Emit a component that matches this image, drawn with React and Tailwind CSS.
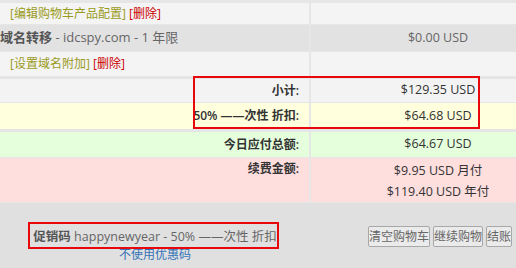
import React from 'react';

const font = { fontFamily: '"Open Sans", "Noto Sans CJK SC", sans-serif' };

function Row({ bg, h, left, right, leftClass = '', rightClass = '' }) {
  return (
    <div className={`grid grid-cols-[309px_1fr] gap-x-[2px] ${h}`}>
      <div className={`${bg} ${leftClass}`}>{left}</div>
      <div className={`${bg} ${rightClass}`}>{right}</div>
    </div>
  );
}

export default function App() {
  return (
    <div
      className="relative w-[516px] h-[268px] overflow-hidden bg-[#e0e0e0] text-[12px] text-[#333]"
      style={font}
    >
      <div className="flex flex-col gap-[1px] bg-[#e6e6e6] pt-[3px] pb-[1px]">
        <Row
          bg="bg-[#f4f4f4]"
          h="h-[21px]"
          leftClass="flex items-center pl-[10px]"
          left={
            <span>
              <a className="text-[#9a9a1c]">[编辑购物车产品配置]</a>{' '}
              <a className="text-[#cc0000]">[删除]</a>
            </span>
          }
        />
        <Row
          bg="bg-[#e2e2e2]"
          h="h-[26px]"
          leftClass="flex items-center text-[#666] text-[13px]"
          rightClass="flex items-center justify-center pl-[49px] text-[#666] text-[12.5px]"
          left={
            <span>
              <b className="font-bold text-[#555]">域名转移</b> - idcspy.com - 1 年限
            </span>
          }
          right="$0.00 USD"
        />
        <Row
          bg="bg-[#f4f4f4]"
          h="h-[24px]"
          leftClass="flex items-center pl-[10px]"
          left={
            <span>
              <a className="text-[#9a9a1c]">[设置域名附加]</a>{' '}
              <a className="text-[#cc0000]">[删除]</a>
            </span>
          }
        />
        <div className="h-[1px]" />
        <Row
          bg="bg-[#f3f3f3]"
          h="h-[23px]"
          leftClass="flex items-center justify-end pr-[10px] font-semibold"
          rightClass="flex items-center justify-center pl-[49px] text-[12.5px]"
          left="小计:"
          right="$129.35 USD"
        />
        <Row
          bg="bg-[#ffffdd]"
          h="h-[26px]"
          leftClass="flex items-center justify-end pr-[10px] font-semibold"
          rightClass="flex items-center justify-center pl-[49px] text-[12.5px]"
          left="50% ——次性 折扣:"
          right="$64.68 USD"
        />
        <div className="h-[1px]" />
        <Row
          bg="bg-[#e5ffdd]"
          h="h-[25px]"
          leftClass="flex items-center justify-end pr-[10px] font-semibold"
          rightClass="flex items-center justify-center pl-[49px] text-[12.5px]"
          left="今日应付总额:"
          right="$64.67 USD"
        />
        <Row
          bg="bg-[#ffdede]"
          h="h-[44px]"
          leftClass="pt-[2px] text-right pr-[10px] font-semibold"
          rightClass="pt-[2px] pl-[49px] text-center text-[12.5px] leading-[21px]"
          left="续费金额:"
          right={
            <>
              <div>$9.95 USD 月付</div>
              <div>$119.40 USD 年付</div>
            </>
          }
        />
      </div>

      <div className="flex items-start pt-[25px]">
        <div className="w-[306px] pl-[4px] text-center leading-[18px]">
          <div className="text-[12.5px] text-[#666]">
            <b className="font-semibold text-[#555]">促销码</b> happynewyear - 50% ——次性 折扣
          </div>
          <a className="block text-[12px] text-[#3372b8]">不使用优惠码</a>
        </div>
        <div className="ml-auto mr-[4px] -mt-[2px] flex gap-[3px]">
          <button className="h-[21px] px-0 border border-[#a8a8a8] rounded-[2px] bg-[#ebebeb] text-[12px] text-[#666] leading-none">
            清空购物车
          </button>
          <button className="h-[21px] px-0 border border-[#a8a8a8] rounded-[2px] bg-[#ebebeb] text-[12px] text-[#666] leading-none">
            继续购物
          </button>
          <button className="h-[21px] px-0 border border-[#a8a8a8] rounded-[2px] bg-[#ebebeb] text-[12px] text-[#666] leading-none">
            结账
          </button>
        </div>
      </div>

      <div className="absolute left-[193px] top-[76px] w-[287px] h-[53px] border-2 border-[#e8070b]" />
      <div className="absolute left-[28px] top-[222px] w-[251px] h-[27px] border-2 border-[#e8070b]" />
    </div>
  );
}
